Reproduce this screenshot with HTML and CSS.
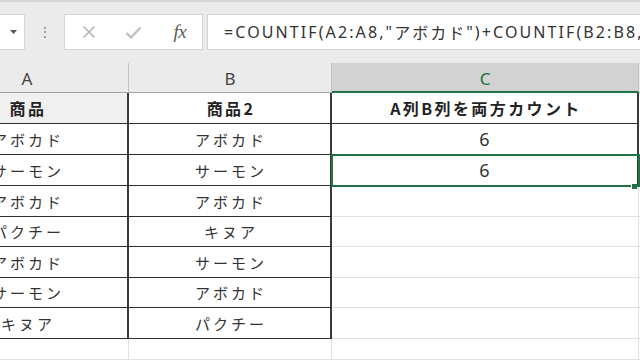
FILE: index.html
```html
<!DOCTYPE html>
<html lang="ja">
<head>
<meta charset="utf-8">
<link rel="stylesheet" href="styles.css">
</head>
<body>
<div class="toolbar">
  <div class="fbar">
    <div class="namebox">
      <svg class="caret" width="7" height="4" viewBox="0 0 7 4"><path d="M0 0H7L3.5 4Z" fill="#555"/></svg>
    </div>
    <div class="dots"><i></i><i></i><i></i></div>
    <div class="fbtns">
      <span class="btn"><svg width="14" height="14" viewBox="0 0 14 14"><path d="M1.5 1.5L12.5 12.5M12.5 1.5L1.5 12.5" stroke="#b3b3b3" stroke-width="1.6" fill="none"/></svg></span>
      <span class="btn"><svg width="17" height="13" viewBox="0 0 17 13"><path d="M1.5 7L6 11.5L15.5 1.5" stroke="#bdbdbd" stroke-width="2.2" fill="none"/></svg></span>
      <span class="btn fx">fx</span>
    </div>
    <div class="finput">=COUNTIF(A2:A8,"<span class="kana">アボカド</span>")+COUNTIF(B2:B8,"<span class="kana">アボカド</span>")</div>
  </div>
</div>
<div class="sheet">
  <div class="ch">A</div><div class="ch">B</div><div class="ch sel">C</div><div class="ch end"></div>

  <div class="cell t b shade">商品</div><div class="cell t b">商品2</div><div class="cell t b">A列B列を両方カウント</div><div class="cell"></div>
  <div class="cell t">アボカド</div><div class="cell t">アボカド</div><div class="cell t num">6</div><div class="cell"></div>
  <div class="cell t">サーモン</div><div class="cell t">サーモン</div><div class="cell t num">6</div><div class="cell"></div>
  <div class="cell t">アボカド</div><div class="cell t">アボカド</div><div class="cell"></div><div class="cell"></div>
  <div class="cell t">パクチー</div><div class="cell t">キヌア</div><div class="cell"></div><div class="cell"></div>
  <div class="cell t">アボカド</div><div class="cell t">サーモン</div><div class="cell"></div><div class="cell"></div>
  <div class="cell t">サーモン</div><div class="cell t">アボカド</div><div class="cell"></div><div class="cell"></div>
  <div class="cell t">キヌア</div><div class="cell t">パクチー</div><div class="cell"></div><div class="cell"></div>
  <div class="cell"></div><div class="cell"></div><div class="cell"></div><div class="cell"></div>

  <div class="selection"><span class="handle"></span></div>
</div>
</body>
</html>
```
FILE: styles.css
```css
html, body {
  margin: 0;
  padding: 0;
  width: 640px;
  height: 360px;
  overflow: hidden;
  background: #ffffff;
  font-family: "Noto Sans", "Noto Sans CJK JP", sans-serif;
  color: #333333;
}

.toolbar {
  height: 63px;
  box-sizing: border-box;
  background: #ebebeb;
  border-top: 2px solid #d6d6d6;
  padding-top: 12px;
}

.fbar {
  display: flex;
  height: 36px;
}

.namebox {
  width: 25px;
  box-sizing: border-box;
  background: #fff;
  border: 1px solid #d4d4d4;
  border-left: none;
  display: flex;
  align-items: center;
  justify-content: center;
  padding-left: 3px;
}

.caret { display: block; }

.dots {
  width: 39px;
  display: flex;
  flex-direction: column;
  align-items: center;
  justify-content: center;
  gap: 2.5px;
}
.dots i {
  display: block;
  width: 2px;
  height: 2px;
  background: #a0a0a0;
}

.fbtns {
  width: 139px;
  box-sizing: border-box;
  background: #fff;
  border: 1px solid #d4d4d4;
  display: flex;
  align-items: center;
  padding-left: 2px;
}
.btn {
  width: 46px;
  display: flex;
  justify-content: center;
  align-items: center;
}
.btn svg { display: block; }
.fx {
  font-family: "Liberation Serif", "DejaVu Serif", serif;
  font-style: italic;
  font-size: 19px;
  color: #5a5a5a;
  letter-spacing: -0.5px;
  padding-left: 2px;
}

.finput {
  flex: 1;
  margin-left: 4px;
  margin-right: -400px;
  background: #fff;
  border: 1px solid #d4d4d4;
  border-right: none;
  padding-left: 16px;
  display: flex;
  align-items: center;
  white-space: nowrap;
  font-family: "Noto Sans", "Noto Sans CJK JP", sans-serif;
  font-size: 16px;
  letter-spacing: 2.1px;
  color: #333;
}
.kana {
  font-family: "Noto Sans CJK JP", sans-serif;
  letter-spacing: 2px;
}

.sheet {
  position: relative;
  margin-left: -74px;
  width: 714px;
  height: 297px;
  display: grid;
  grid-template-columns: 203px 203px 307px 1fr;
  grid-template-rows: 30px 31px 31px 31px 31px 30px 31px 30px 31px 1fr;
}

.ch {
  background: #ebebeb;
  border-right: 1px solid #c4c4c4;
  border-bottom: 1px solid #a3a3a3;
  display: flex;
  align-items: center;
  justify-content: center;
  font-size: 17px;
  color: #444;
  padding-top: 2px;
}
.ch.sel {
  background: #d2d2d2;
  color: #217346;
  border-bottom: 2px solid #217346;
}
.ch.end { border-right: none; }

.cell {
  border-right: 1px solid #e1e1e1;
  border-bottom: 1px solid #e1e1e1;
  display: flex;
  align-items: center;
  justify-content: center;
  font-family: "Noto Sans CJK JP", sans-serif;
  font-size: 15px;
  letter-spacing: 3px;
  padding-left: 3px;
  color: #333;
  white-space: nowrap;
}
.cell.t {
  border-right: 2px solid #3a3a3a;
  border-bottom: 1px solid #2e2e2e;
}
.cell.b {
  font-weight: 700;
  font-size: 16px;
  letter-spacing: 2.4px;
  color: #222;
}
.cell.shade { background: #f0f0f0; }
.cell.num {
  font-family: "Noto Sans", sans-serif;
  font-size: 18px;
  letter-spacing: 0;
  padding-left: 0;
}

.selection {
  position: absolute;
  left: 405px;
  top: 91px;
  width: 309px;
  height: 33px;
  box-sizing: border-box;
  border: 2px solid #217346;
}
.handle {
  position: absolute;
  right: 1px;
  bottom: -4px;
  width: 5px;
  height: 5px;
  background: #217346;
  border-top: 1px solid #fff;
  border-left: 1px solid #fff;
}
```
